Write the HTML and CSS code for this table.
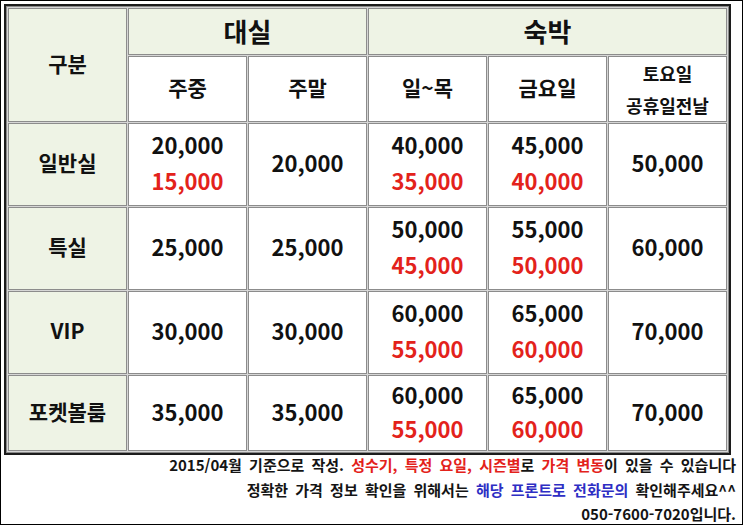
FILE: index.html
```html
<!DOCTYPE html>
<html lang="ko">
<head>
<meta charset="utf-8">
<title>요금표</title>
<link rel="stylesheet" href="styles.css">
</head>
<body>
<div class="frame">
  <div class="table-wrap">
    <table class="price">
      <colgroup>
        <col><col><col><col><col><col>
      </colgroup>
      <tr class="r-head1">
        <th class="hd kind" rowspan="2">구분</th>
        <th class="hd big" colspan="2">대실</th>
        <th class="hd big" colspan="3">숙박</th>
      </tr>
      <tr class="r-head2">
        <th class="sub">주중</th>
        <th class="sub">주말</th>
        <th class="sub">일~목</th>
        <th class="sub">금요일</th>
        <th class="sub small"><span class="ln">토요일</span><span class="ln">공휴일전날</span></th>
      </tr>
      <tr class="r-data">
        <th class="hd name">일반실</th>
        <td><span class="ln">20,000</span><span class="ln sale">15,000</span></td>
        <td>20,000</td>
        <td><span class="ln">40,000</span><span class="ln sale">35,000</span></td>
        <td><span class="ln">45,000</span><span class="ln sale">40,000</span></td>
        <td>50,000</td>
      </tr>
      <tr class="r-data">
        <th class="hd name">특실</th>
        <td>25,000</td>
        <td>25,000</td>
        <td><span class="ln">50,000</span><span class="ln sale">45,000</span></td>
        <td><span class="ln">55,000</span><span class="ln sale">50,000</span></td>
        <td>60,000</td>
      </tr>
      <tr class="r-data">
        <th class="hd name">VIP</th>
        <td>30,000</td>
        <td>30,000</td>
        <td><span class="ln">60,000</span><span class="ln sale">55,000</span></td>
        <td><span class="ln">65,000</span><span class="ln sale">60,000</span></td>
        <td>70,000</td>
      </tr>
      <tr class="r-data r-last">
        <th class="hd name">포켓볼룸</th>
        <td>35,000</td>
        <td>35,000</td>
        <td><span class="ln">60,000</span><span class="ln sale">55,000</span></td>
        <td><span class="ln">65,000</span><span class="ln sale">60,000</span></td>
        <td>70,000</td>
      </tr>
    </table>
  </div>
  <div class="notes">
    <p>2015/04월 기준으로 작성. <span class="red">성수기, 특정 요일, 시즌별</span>로 <span class="red">가격 변동</span>이 있을 수 있습니다</p>
    <p>정확한 가격 정보 확인을 위해서는 <span class="blue">해당 프론트로 전화문의</span> 확인해주세요^^</p>
    <p>050-7600-7020입니다.</p>
  </div>
</div>
</body>
</html>
```

FILE: styles.css
```css
* { box-sizing: border-box; }

html, body {
  margin: 0;
  padding: 0;
  background: #ffffff;
}

body {
  font-family: "Noto Sans CJK KR", "Noto Sans", sans-serif;
  color: #111111;
}

.frame {
  width: 743px;
  height: 525px;
  border: 1px solid #000;
  padding: 3px 0 0 3px;
}

.table-wrap {
  width: 727px;
  border: 2px solid #1c1c1c;
}

.price {
  width: 100%;
  table-layout: fixed;
  border-collapse: separate;
  border-spacing: 1px;
  border: 1px solid #8a8a8a;
  background: #d6d6d6;
}

.price th,
.price td {
  border: 1px solid #8c8c8c;
  background: #ffffff;
  text-align: center;
  vertical-align: middle;
  padding: 0 0 5px 0;
  font-weight: 700;
  font-size: 22px;
  line-height: 36px;
}

.price .hd { background: #eef3e5; }

.r-head1 { height: 47px; }
.r-head2 { height: 66px; }
.r-data { height: 83px; }
.price .r-last { height: 76px; }
.r-last th,
.r-last td { line-height: 34px; }

.price .big { font-size: 26px; line-height: 30px; padding-bottom: 2px; }
.price .kind { font-size: 21px; }
.price .sub { font-size: 21px; }
.price .small { font-size: 18px; line-height: 32px; padding-bottom: 0; }
.price .name { font-size: 21px; }

.ln { display: block; }
.sale { color: #e3221b; }

.notes {
  width: 732px;
  margin-top: -2px;
  text-align: right;
  font-size: 15px;
  font-weight: 700;
  line-height: 24.5px;
  word-spacing: 3px;
  color: #141414;
}

.notes p { margin: 0; }

.red { color: #e3221b; }
.blue { color: #2e2ec4; }
```
